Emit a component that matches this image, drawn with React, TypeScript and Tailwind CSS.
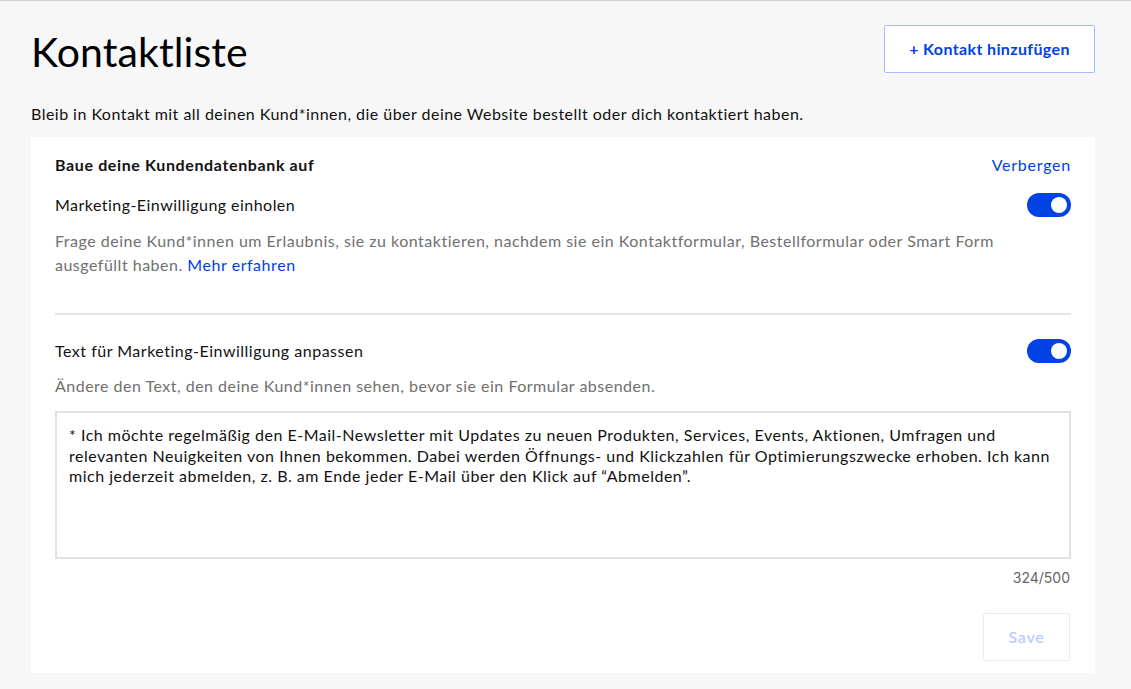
function Toggle() {
  return (
    <div className="flex h-6 w-11 items-center justify-end rounded-full bg-[#0042e4] pr-1">
      <div className="h-4 w-4 rounded-full bg-white" />
    </div>
  );
}

const consent =
  '* Ich möchte regelmäßig den E-Mail-Newsletter mit Updates zu neuen Produkten, Services, Events, Aktionen, Umfragen und\nrelevanten Neuigkeiten von Ihnen bekommen. Dabei werden Öffnungs- und Klickzahlen für Optimierungszwecke erhoben. Ich kann\nmich jederzeit abmelden, z. B. am Ende jeder E-Mail über den Klick auf “Abmelden”.';

export default function App() {
  return (
    <div className="h-[689px] overflow-hidden border-t border-[#d2d2d2] bg-[#f7f7f7] pl-[31px] pr-9 font-['Lato',sans-serif] text-[#111]">
      <div className="flex h-[95px] items-start justify-between pt-6">
        <h1 className="mt-[2px] text-[41px] leading-[50px] tracking-[0.1px] text-black">Kontaktliste</h1>
        <button
          type="button"
          className="h-12 w-[211px] rounded-[2px] border border-[#a6bbff] bg-white text-base font-bold tracking-[0.37px] text-[#0042e4]"
        >
          + Kontakt hinzufügen
        </button>
      </div>
      <p className="h-[41px] pt-[8px] text-base leading-5 tracking-[0.47px]">
        Bleib in Kontakt mit all deinen Kund*innen, die über deine Website bestellt oder dich kontaktiert haben.
      </p>
      <div className="h-[536px] bg-white px-6 pt-[18px]">
        <div className="flex h-5 items-center justify-between text-base">
          <span className="font-bold tracking-[0.63px]">Baue deine Kundendatenbank auf</span>
          <a className="tracking-[0.75px] text-[#0042e4]">Verbergen</a>
        </div>
        <div className="mt-[18px] flex h-6 items-center justify-between text-base">
          <span className="tracking-[0.46px]">Marketing-Einwilligung einholen</span>
          <Toggle />
        </div>
        <p className="mt-[12px] text-base leading-6 tracking-[0.5px] text-[#707070]">
          Frage deine Kund*innen um Erlaubnis, sie zu kontaktieren, nachdem sie ein Kontaktformular, Bestellformular oder Smart Form
          <br />
          ausgefüllt haben. <a className="tracking-[0.55px] text-[#0042e4]">Mehr erfahren</a>
        </p>
        <div className="mt-[36px] h-[2px] bg-[#e4e4e4]" />
        <div className="mt-6 flex h-6 items-center justify-between text-base">
          <span className="tracking-[0.5px]">Text für Marketing-Einwilligung anpassen</span>
          <Toggle />
        </div>
        <p className="mt-[13px] text-base leading-5 tracking-[0.49px] text-[#707070]">
          Ändere den Text, den deine Kund*innen sehen, bevor sie ein Formular absenden.
        </p>
        <textarea
          readOnly
          value={consent}
          className="mt-[15px] block h-[148px] w-full resize-none overflow-hidden border-2 border-[#e2e2e2] px-3 pt-[12px] pb-3 text-base leading-[20.5px] tracking-[0.51px] whitespace-pre outline-none"
        />
        <div className="mt-[11px] mr-[1px] text-right font-['Inter',sans-serif] text-sm leading-4 text-[#666]">324/500</div>
        <div className="mt-[27px] mr-[1px] flex justify-end">
          <button
            type="button"
            className="h-12 w-[87px] rounded-[2px] border border-[#e5eaff] bg-white text-base font-semibold tracking-[0.7px] text-[#b9cbff]"
          >
            Save
          </button>
        </div>
      </div>
    </div>
  );
}
